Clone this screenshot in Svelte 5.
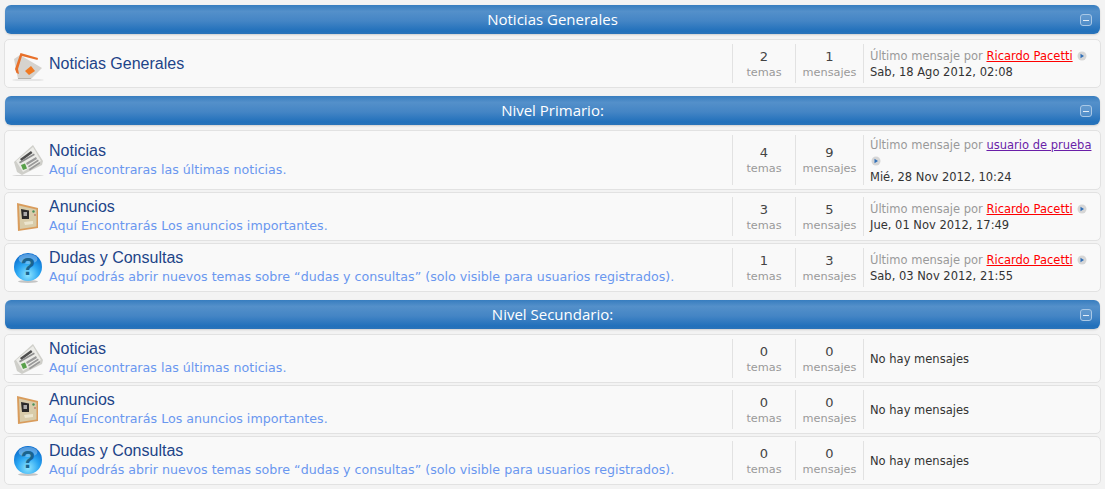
<script>
  const sections = [
    {
      title: 'Noticias Generales',
      forums: [
        { icon: 'home', name: 'Noticias Generales', desc: '', temas: 2, msgs: 1, user: 'Ricardo Pacetti', color: 'red', date: 'Sab, 18 Ago 2012, 02:08' }
      ]
    },
    {
      title: 'Nivel Primario:',
      forums: [
        { icon: 'news', name: 'Noticias', desc: 'Aquí encontraras las últimas noticias.', temas: 4, msgs: 9, user: 'usuario de prueba', color: 'purple', date: 'Mié, 28 Nov 2012, 10:24', tall: true },
        { icon: 'board', name: 'Anuncios', desc: 'Aquí Encontrarás Los anuncios importantes.', temas: 3, msgs: 5, user: 'Ricardo Pacetti', color: 'red', date: 'Jue, 01 Nov 2012, 17:49' },
        { icon: 'help', name: 'Dudas y Consultas', desc: 'Aquí podrás abrir nuevos temas sobre “dudas y consultas” (solo visible para usuarios registrados).', temas: 1, msgs: 3, user: 'Ricardo Pacetti', color: 'red', date: 'Sab, 03 Nov 2012, 21:55' }
      ]
    },
    {
      title: 'Nivel Secundario:',
      forums: [
        { icon: 'news', name: 'Noticias', desc: 'Aquí encontraras las últimas noticias.', temas: 0, msgs: 0 },
        { icon: 'board', name: 'Anuncios', desc: 'Aquí Encontrarás Los anuncios importantes.', temas: 0, msgs: 0 },
        { icon: 'help', name: 'Dudas y Consultas', desc: 'Aquí podrás abrir nuevos temas sobre “dudas y consultas” (solo visible para usuarios registrados).', temas: 0, msgs: 0 }
      ]
    }
  ];
</script>

<div class="page">
  {#each sections as section}
    <section class="section">
      <div class="head">
        <h2>{section.title}</h2>
        <span class="toggle"><span></span></span>
      </div>
      {#each section.forums as f}
        <div class="row" class:tall={f.tall}>
          <div class="icon">
            {#if f.icon === 'home'}
              <svg width="32" height="32" viewBox="0 0 32 32">
                <ellipse cx="15" cy="32" rx="16" ry="0.6" fill="#d4d4d4" />
                <path d="M1 11 L7 7 L29 20 L18 31 L5 31 Z" fill="#d6d3ce" />
                <path d="M5 30 L18 30 L18 31 L5 31 Z" fill="#b5b2ac" />
                <path d="M2 21 L7.5 5 L25 10 L24.5 12 L9 8 L5 21 L6 26 L3.5 25 Z" fill="#e8702a" />
                <path d="M12 23 L18 18 L22 23 L16 27 Z" fill="#f07a22" />
              </svg>
            {:else if f.icon === 'news'}
              <svg width="32" height="32" viewBox="0 0 32 32">
                <ellipse cx="15" cy="31.5" rx="16" ry="0.6" fill="#d4d4d4" />
                <path d="M1 18 L20 1 L30 17 L29 21 L9 31 L4 28 Z" fill="#cfcfca" />
                <path d="M3 17 L20 3 L28 17 L10 28 Z" fill="#ecece8" />
                <path d="M7 15 L18 7 L19.5 9 L8.5 17 Z" fill="#4d4d4d" />
                <path d="M6 18 L21 9.5 L21.8 11 L7 19.5 Z" fill="#8e8e8e" />
                <path d="M13 19 L23 13 L24 15 L14 21 Z M15 22 L25 15.5 L25.8 17 L15.8 23.4 Z M16 25 L26.5 18 L27.2 19.4 L16.8 26.4 Z" fill="#999" />
                <path d="M8 21 L12 19.5 L14 24.5 L10 26 Z" fill="#58a04a" />
              </svg>
            {:else if f.icon === 'board'}
              <svg width="32" height="32" viewBox="0 0 32 32">
                <path d="M4 2 L25 7 L25 27 L5 30 Z" fill="#d99c5c" />
                <path d="M6 4.5 L23.5 8.5 L23.5 25.5 L7 28 Z" fill="#d8ccaa" />
                <path d="M8 8 L16 9.5 L16 18 L9 18 Z" fill="#2a2a2a" />
                <rect x="10.5" y="11" width="3.5" height="4" fill="#aaa" />
                <circle cx="20.5" cy="10.5" r="1.2" fill="#4a8f5a" />
                <circle cx="22" cy="14" r="0.8" fill="#b04a4a" />
                <path d="M11 21 L20 20 L20 23 L12 24 Z" fill="#ece6cf" />
              </svg>
            {:else}
              <svg width="32" height="32" viewBox="0 0 32 32">
                <defs>
                  <radialGradient id="ball" cx="50%" cy="78%" r="72%">
                    <stop offset="0" stop-color="#8fe6ff" />
                    <stop offset="0.55" stop-color="#2aa6f2" />
                    <stop offset="1" stop-color="#0a6fd0" />
                  </radialGradient>
                </defs>
                <ellipse cx="15" cy="29.5" rx="10" ry="1.4" fill="#c4c4c4" />
                <circle cx="15" cy="15" r="14" fill="url(#ball)" />
                <ellipse cx="15" cy="7" rx="9.5" ry="5" fill="#fff" opacity="0.3" />
                <text x="15" y="23" class="q">?</text>
              </svg>
            {/if}
          </div>
          <div class="main">
            <a class="name" href="#top">{f.name}</a>
            {#if f.desc}<p class="desc">{f.desc}</p>{/if}
          </div>
          <div class="stat stat-t"><b>{f.temas}</b><span>temas</span></div>
          <div class="stat stat-m"><b>{f.msgs}</b><span>mensajes</span></div>
          <div class="last">
            {#if f.user}
              <div class="by">
                Último mensaje por <a class={f.color} href="#top">{f.user}</a>
                <svg class="go" width="10" height="10" viewBox="0 0 10 10">
                  <circle cx="5" cy="5" r="4.5" fill="#d6d6d6" />
                  <path d="M3.5 2.8 L7 5 L3.5 7.2 Z" fill="#2f6fb8" />
                </svg>
              </div>
              <div class="date">{f.date}</div>
            {:else}
              <div class="date">No hay mensajes</div>
            {/if}
          </div>
        </div>
      {/each}
    </section>
  {/each}
</div>

<style>
  :global(body) {
    background: #f3f3f3;
  }

  .page {
    padding: 5px 5px 0;
    display: flex;
    flex-direction: column;
    gap: 8px;
  }

  .section {
    display: flex;
    flex-direction: column;
    gap: 2px;
  }

  .head {
    height: 29px;
    margin-bottom: 3px;
    padding-bottom: 2px;
    box-sizing: border-box;
    display: flex;
    align-items: center;
    justify-content: center;
    position: relative;
    border-radius: 6px;
    background: linear-gradient(#377dbf 0%, #5490ca 22%, #4485c5 55%, #2170bb 90%, #2a73b9 100%);
    box-shadow: 0 1px 2px rgba(0, 0, 0, 0.15);
  }

  h2 {
    margin: 0;
    font: 400 15px "Open Sans", sans-serif;
    color: #fff;
  }

  .toggle {
    position: absolute;
    right: 8px;
    top: 9px;
    width: 10px;
    height: 10px;
    border: 1px solid #a9c8e6;
    border-radius: 3px;
    background: rgba(255, 255, 255, 0.12);
    display: flex;
    align-items: center;
    justify-content: center;
  }

  .toggle span {
    width: 6px;
    height: 1px;
    background: #e2edf7;
  }

  .row {
    height: 47px;
    margin: 0 -1px;
    background: #f9f9f9;
    border: 1px solid #e2e2e2;
    border-radius: 5px;
    display: flex;
    align-items: center;
    box-sizing: content-box;
  }

  .row.tall {
    height: 58px;
  }

  .icon {
    width: 32px;
    height: 32px;
    margin-left: 8px;
    margin-right: 4px;
    flex-shrink: 0;
  }

  .icon svg {
    display: block;
    overflow: visible;
  }

  .q {
    font: 700 24px "Liberation Sans", sans-serif;
    fill: #1a648f;
    text-anchor: middle;
  }

  .main {
    flex: 1;
    min-width: 0;
    padding-bottom: 1px;
  }

  .name {
    display: block;
    font: 400 16px/19px "Liberation Sans", sans-serif;
    color: #1d4488;
    text-decoration: none;
  }

  .desc {
    margin: 2px 0 0;
    padding-bottom: 1px;
    font: 400 12.65px/16px "DejaVu Sans", sans-serif;
    color: #6a97ef;
  }

  .stat {
    align-self: stretch;
    margin: 4px 0;
    padding-top: 1px;
    box-sizing: border-box;
    border-left: 1px solid #e2e2e2;
    display: flex;
    flex-direction: column;
    align-items: center;
    justify-content: center;
    font-family: "DejaVu Sans", sans-serif;
    flex-shrink: 0;
  }

  .stat-t {
    width: 63px;
  }

  .stat-m {
    width: 68px;
  }

  .stat b {
    font-weight: 400;
    font-size: 13px;
    line-height: 16px;
    color: #444;
  }

  .stat span {
    font-size: 11.3px;
    line-height: 15px;
    color: #999;
  }

  .last {
    align-self: stretch;
    width: 237px;
    margin: 4px 0;
    padding: 1px 0 0 6px;
    box-sizing: border-box;
    border-left: 1px solid #e2e2e2;
    display: flex;
    flex-direction: column;
    justify-content: center;
    font: 400 11.5px/16px "DejaVu Sans", sans-serif;
    flex-shrink: 0;
  }

  .by {
    color: #999;
  }

  .by a {
    text-decoration: underline;
  }

  .red {
    color: #f00;
  }

  .purple {
    color: #6a1fa8;
  }

  .go {
    vertical-align: -1px;
    margin-left: 1px;
  }

  .date {
    color: #333;
  }
</style>
